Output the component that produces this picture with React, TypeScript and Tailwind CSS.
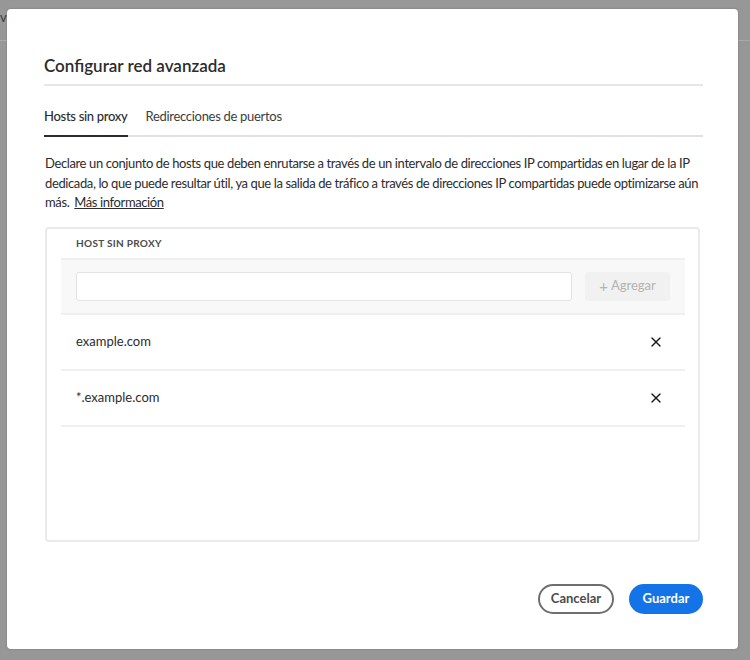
import { X } from 'lucide-react'

const hosts = ['example.com', '*.example.com']

export default function App() {
  return (
    <div className="relative h-[660px] w-[750px] overflow-hidden bg-[#979797] font-['Lato',sans-serif]">
      <div className="h-[41px] border-b border-[#a9a9a9] pt-[8px] text-[13px] text-[#3a3a3a]">
        vi
      </div>

      <div className="absolute left-[7px] top-[9px] flex h-[640px] w-[731px] flex-col rounded-[4px] bg-white pl-[37px] pr-[35px] pt-[45px] shadow-[0_0_2px_rgba(0,0,0,0.25)]">
        <h2 className="border-b-2 border-[#e6e6e6] pb-[6px] text-[17px] font-semibold leading-[24px] text-[#2c2c2c]">
          Configurar red avanzada
        </h2>

        <nav className="flex gap-[18px] border-b-2 border-[#e1e1e1] text-[13px] tracking-[-0.3px] text-[#2c2c2c]">
          <div className="-mb-[2px] border-b-2 border-[#2c2c2c] pb-[9px] pt-[20px] font-medium leading-[20px]">
            Hosts sin proxy
          </div>
          <div className="pb-[9px] pt-[20px] leading-[20px] text-[#3d3d3d]">
            Redirecciones de puertos
          </div>
        </nav>

        <p className="mt-[17px] pl-[1px] text-[13px] leading-[19.5px] tracking-[-0.38px] text-[#2c2c2c]">
          Declare un conjunto de hosts que deben enrutarse a través de un intervalo de direcciones IP
          compartidas en lugar de la IP dedicada, lo que puede resultar útil, ya que la salida de
          tráfico a través de direcciones IP compartidas puede optimizarse aún más.{' '}
          <a href="#" className="ml-[2px] inline-block underline">
            Más información
          </a>
        </p>

        <section className="mt-[14px] ml-[1px] mr-[3px] flex h-[315px] flex-col rounded-[4px] border-2 border-[#eaeaea] pl-[14px] pr-[13px]">
          <div className="pl-[15px] pt-[7px] pb-[8px] text-[10px] font-bold uppercase leading-[14px] tracking-[0.3px] text-[#4b4b4b]">
            Host sin proxy
          </div>
          <div className="flex gap-[13px] border-y-2 border-[#efefef] bg-[#f8f8f8] px-[15px] pb-[12px] pt-[12px]">
            <input
              type="text"
              className="h-[29px] flex-1 rounded-[3px] border border-[#e3e3e3] bg-white px-2 text-[13px] outline-none"
            />
            <button className="flex h-[29px] w-[85px] items-center justify-center gap-[3px] rounded-[3px] bg-[#f1f1f1] text-[13px] text-[#b3b3b3]">
              <span className="text-[15px] leading-none">+</span> Agregar
            </button>
          </div>
          {hosts.map((h) => (
            <div
              key={h}
              className="flex h-[56px] items-center justify-between border-b-2 border-[#f0f0f0] pl-[15px] pr-[21px] text-[13px] text-[#2c2c2c]"
            >
              <span>{h}</span>
              <X size={16} strokeWidth={2} className="text-[#1a1a1a]" />
            </div>
          ))}
        </section>

        <div className="mt-[42px] flex justify-end gap-[15px]">
          <button className="h-[30px] w-[76px] rounded-full border-2 border-[#6e6e6e] text-[13px] font-bold text-[#4b4b4b]">
            Cancelar
          </button>
          <button className="h-[30px] w-[74px] rounded-full bg-[#1473e6] text-[13px] font-bold text-white">
            Guardar
          </button>
        </div>
      </div>
    </div>
  )
}
